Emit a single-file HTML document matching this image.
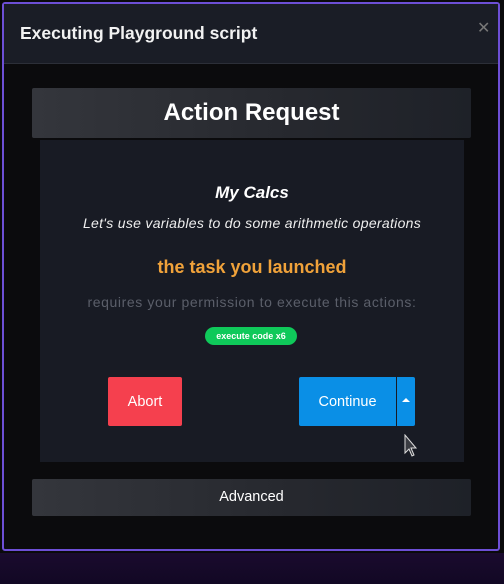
<!DOCTYPE html>
<html><head><style>
body{margin:0;width:504px;height:584px;background:#0a0a0c;position:relative;overflow:hidden;font-family:"Liberation Sans",sans-serif;}
.bot{position:absolute;left:0;top:553px;width:504px;height:31px;background:linear-gradient(#1a0b2e,#120824);}
.modal{position:absolute;left:2px;top:2px;width:494px;height:545px;border:2px solid #6d4fd6;border-radius:3px;background:#0b0b0d;}
.hdr{position:absolute;left:0;top:0;width:494px;height:59px;background:#1a1d26;border-bottom:1px solid #2c2f38;}
.hdr .t{position:absolute;left:16px;top:19px;color:#f2f2f2;font-size:17.5px;font-weight:bold;}
.x{position:absolute;left:473px;top:14px;color:#777;font-size:16px;}
.bar{position:absolute;left:28px;width:439px;background:linear-gradient(90deg,#34363c,#26282e 60%,#1e2128);color:#fff;text-align:center;border-radius:2px;}
.panel{position:absolute;left:36px;top:136px;width:424px;height:322px;background:#181b24;}
.c{position:absolute;left:0;width:424px;text-align:center;}
</style></head><body>
<div class="bot"></div>
<div class="modal">
 <div class="hdr"><div class="t">Executing Playground script</div><div class="x">✕</div></div>
 <div class="bar" style="top:84px;height:50px;line-height:50px;font-size:24px;font-weight:bold;">Action Request</div>
 <div class="panel">
  <div class="c" style="top:43px;color:#fff;font-size:17px;font-weight:bold;font-style:italic;">My Calcs</div>
  <div class="c" style="top:75px;color:#eee;font-size:14px;font-style:italic;letter-spacing:0.3px;">Let's use variables to do some arithmetic operations</div>
  <div class="c" style="top:117px;color:#f0a23a;font-size:18px;font-weight:bold;">the task you launched</div>
  <div class="c" style="top:154px;color:#5b5f6a;font-size:14px;letter-spacing:0.6px;">requires your permission to execute this actions:</div>
  <div style="position:absolute;left:165px;top:187px;width:92px;height:18px;border-radius:9px;background:#0fc95a;color:#fff;font-size:9px;font-weight:bold;text-align:center;line-height:18px;">execute code x6</div>
  <div style="position:absolute;left:68px;top:237px;width:74px;height:49px;background:#f5404e;border-radius:2px;color:#fff;font-size:14.5px;text-align:center;line-height:51px;">Abort</div>
  <div style="position:absolute;left:259px;top:237px;width:97px;height:49px;background:#0a8fe6;border-radius:2px 0 0 2px;color:#fff;font-size:14.5px;text-align:center;line-height:51px;">Continue</div>
  <div style="position:absolute;left:357px;top:237px;width:18px;height:49px;background:#0a8fe6;border-radius:0 2px 2px 0;"><div style="position:absolute;left:5px;top:21px;border-left:4px solid transparent;border-right:4px solid transparent;border-bottom:4px solid #fff;"></div></div>
  <svg style="position:absolute;left:364px;top:294px" width="14" height="24" viewBox="0 0 14 24"><path d="M1 1 L1 19 L5 15 L8 22 L10 21 L7 14 L12 14 Z" fill="#3a3c42" stroke="#ddd" stroke-width="1"/></svg>
 </div>
 <div class="bar" style="top:475px;height:37px;line-height:37px;font-size:14.5px;">Advanced</div>
</div>
</body></html>
